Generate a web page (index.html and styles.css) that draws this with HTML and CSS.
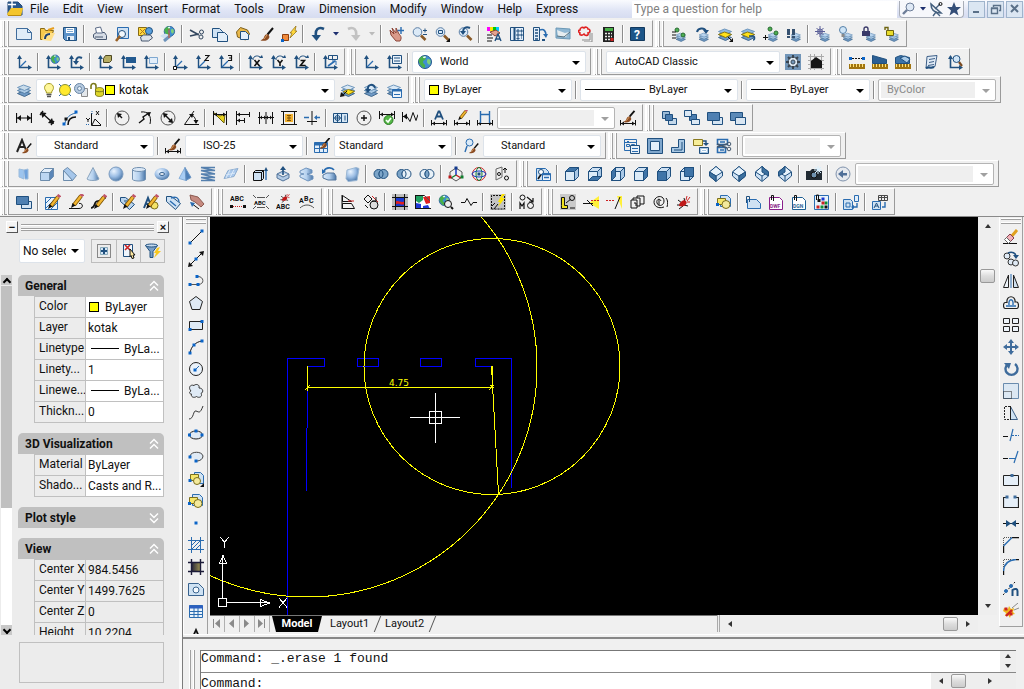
FILE: index.html
```
<!DOCTYPE html>
<html lang="en">

<head>
    <meta charset="UTF-8">
    <meta name="viewport" content="width=device-width, initial-scale=1.0">
    <title>AutoCAD Classic</title>
    <link rel="stylesheet" href="styles.css">
</head>

<body>
    <header class="menubar">
        <span class="logo" data-icon="logo"></span>
        <nav class="menu">
            <button>File</button>
            <button>Edit</button>
            <button>View</button>
            <button>Insert</button>
            <button>Format</button>
            <button>Tools</button>
            <button>Draw</button>
            <button>Dimension</button>
            <button>Modify</button>
            <button>Window</button>
            <button>Help</button>
            <button>Express</button>
        </nav>
        <input class="ask" type="text" aria-label="Help search" placeholder="Type a question for help">
        <div class="info" data-tools="search more comm star"></div>
        <div class="win" data-tools="win-min win-restore win-close"></div>
    </header>

    <!-- docked toolbars -->
    <div class="dock">
        <div class="row">
            <div class="bar" data-tools="new open save | print preview publish web | cut copy paste match blockedit | undo more redo more-off | pan zoom-rt zoom-win zoom-prev | props dcenter palettes sheetset markup calc | help"></div>
            <div class="bar" data-tools="lay-match lay-prev lay-iso lay-uniso lay-copy lay-walk | lay-freeze lay-off lay-lock lay-unlock"></div>
        </div>

        <div class="row">
            <div class="bar" data-tools="ucs | ucs-world ucs-prev | ucs-face ucs-object ucs-view | ucs-origin ucs-z ucs-3 | ucs-rx ucs-ry ucs-rz | ucs-apply"></div>
            <div class="bar">
                <span class="tools" data-tools="ucs ucs-named |"></span>
                <div class="combo combo-mid">
                    <span class="pic" data-icon="globe"></span>
                    <select aria-label="UCS"><option>World</option></select>
                </div>
            </div>
            <div class="bar">
                <div class="combo combo-mid">
                    <select class="pad-s" aria-label="Workspace"><option>AutoCAD Classic</option></select>
                </div>
                <span class="tools" data-tools="gear my-workspace"></span>
            </div>
            <div class="bar" data-tools="inq-dist inq-area inq-mass | inq-list inq-id"></div>
        </div>

        <div class="row">
            <div class="bar">
                <span class="tools" data-tools="layers"></span>
                <div class="combo combo-layer">
                    <span class="pic" data-icon="bulb"></span>
                    <span class="pic" data-icon="sun"></span>
                    <span class="pic" data-icon="vp-freeze"></span>
                    <span class="pic" data-icon="unlock"></span>
                    <i class="swatch"></i>
                    <select aria-label="Layer"><option>kotak</option></select>
                </div>
                <span class="tools" data-tools="lay-current lay-back lay-states"></span>
            </div>
            <div class="bar">
                <div class="combo combo-color">
                    <i class="swatch"></i>
                    <select aria-label="Color"><option>ByLayer</option></select>
                </div>
                <span class="sep"></span>
                <div class="combo combo-ltype">
                    <i class="dash dash-long"></i>
                    <select aria-label="Linetype"><option>ByLayer</option></select>
                </div>
                <span class="sep"></span>
                <div class="combo combo-lweight">
                    <i class="dash"></i>
                    <select aria-label="Lineweight"><option>ByLayer</option></select>
                </div>
                <span class="sep"></span>
                <div class="combo combo-style off">
                    <select class="pad-s" aria-label="Plot style" disabled><option>ByColor</option></select>
                </div>
            </div>
        </div>

        <div class="row">
            <div class="bar">
                <span class="tools" data-tools="dim-lin dim-align dim-arc dim-ord | dim-rad dim-jog dim-dia dim-ang | dim-quick dim-base dim-cont dim-space dim-break | dim-tol dim-center dim-inspect dim-jogline | dim-edit dim-tedit dim-update"></span>
                <div class="combo combo-style off">
                    <select aria-label="Dimension style" disabled><option></option></select>
                </div>
                <span class="tools" data-tools="dim-style"></span>
            </div>
            <div class="bar" data-tools="ord-front ord-back ord-above ord-under"></div>
        </div>

        <div class="row">
            <div class="bar">
                <span class="tools" data-tools="text-style"></span>
                <div class="combo combo-style">
                    <select class="pad-l" aria-label="Text style"><option>Standard</option></select>
                </div>
                <span class="tools" data-tools="| dim-style"></span>
                <div class="combo combo-style">
                    <select class="pad-l" aria-label="Dim style"><option>ISO-25</option></select>
                </div>
                <span class="tools" data-tools="| table-style"></span>
                <div class="combo combo-style">
                    <select class="pad-0" aria-label="Table style"><option>Standard</option></select>
                </div>
                <span class="tools" data-tools="| ml-style"></span>
                <div class="combo combo-style">
                    <select class="pad-l" aria-label="Multileader style"><option>Standard</option></select>
                </div>
            </div>
            <div class="bar">
                <span class="tools" data-tools="vp-dialog vp-single vp-poly vp-object vp-clip |"></span>
                <div class="combo combo-scale off">
                    <select aria-label="Viewport scale" disabled><option></option></select>
                </div>
            </div>
        </div>

        <div class="row">
            <div class="bar" data-tools="polysolid box wedge cone sphere cylinder torus pyramid helix planar | extrude presspull sweep revolve loft | union subtract intersect | move3d rotate3d align3d"></div>
            <div class="bar">
                <span class="tools" data-tools="view-named | view-top view-bottom view-left view-right view-front view-back | iso-sw iso-se iso-ne iso-nw | camera | view-prev"></span>
                <div class="combo combo-views off">
                    <select aria-label="Views" disabled><option></option></select>
                </div>
            </div>
        </div>

        <div class="row">
            <div class="bar" data-tools="ord-above | edit-hatch edit-pline edit-spline | edit-attr edit-block sync-attr extract-attr"></div>
            <div class="bar" data-tools="txt-fit txt-mask txt-explode txt-arc"></div>
            <div class="bar" data-tools="blk-list blk-trim | xclip img-clip wipe-globe breakline | super-hatch | mocoro"></div>
            <div class="bar" data-tools="ex-move ex-beam ex-trim ex-extrude ex-spiral ex-bug"></div>
            <div class="bar" data-tools="insert-block | xref ref-dwf ref-dgn ref-img | frame-a | frame-b"></div>
        </div>
    </div>

    <main class="work">
        <aside class="palette">
            <div class="palette-title">
                <button class="mini" aria-label="Collapse">&minus;</button>
                <span class="lines"></span>
                <button class="mini" aria-label="Close">&times;</button>
            </div>
            <div class="palette-pick">
                <div class="combo combo-pick">
                    <select aria-label="Selection"><option>No selection</option></select>
                </div>
                <div class="pick-tools" data-tools="pick-add pick-object pick-quick"></div>
            </div>
            <div class="palette-body">
                <div class="pscroll">
                    <button class="mini-up" aria-label="Scroll up"></button>
                    <i class="pthumb"></i>
                    <button class="mini-down" aria-label="Scroll down"></button>
                </div>
                <div class="groups">
                    <section>
                        <h2>General <span data-icon="chev-up"></span></h2>
                        <table>
                            <tr><th>Color</th><td><i class="swatch"></i>ByLayer</td></tr>
                            <tr><th>Layer</th><td>kotak</td></tr>
                            <tr><th>Linetype</th><td><i class="dash"></i>ByLa...</td></tr>
                            <tr><th>Linety...</th><td>1</td></tr>
                            <tr><th>Linewe...</th><td><i class="dash"></i>ByLa...</td></tr>
                            <tr><th>Thickn...</th><td>0</td></tr>
                        </table>
                    </section>
                    <section>
                        <h2>3D Visualization <span data-icon="chev-up"></span></h2>
                        <table>
                            <tr><th>Material</th><td>ByLayer</td></tr>
                            <tr><th>Shado...</th><td>Casts and R...</td></tr>
                        </table>
                    </section>
                    <section>
                        <h2>Plot style <span data-icon="chev-down"></span></h2>
                    </section>
                    <section>
                        <h2>View <span data-icon="chev-up"></span></h2>
                        <table class="readonly">
                            <tr><th>Center X</th><td>984.5456</td></tr>
                            <tr><th>Center Y</th><td>1499.7625</td></tr>
                            <tr><th>Center Z</th><td>0</td></tr>
                            <tr><th>Height</th><td>10.2204</td></tr>
                        </table>
                    </section>
                </div>
            </div>
            <div class="palette-hint"></div>
        </aside>

        <div class="side">
            <div class="editor">
                <div class="vbar" data-tools="line xline pline polygon rect arc circle revcloud spline ellipse ellarc insert-more insert-block point hatch gradient region table mtext"></div>

                <div class="view">
                    <div class="view-main">
                        <svg class="drawing" aria-label="Model space">
                            <g transform="translate(-210 -217)" shape-rendering="crispEdges">
                                <g class="blue">
                                    <path d="M287.5 615V358.5H324.5V366.5H307.5V428M306.5 428V491" />
                                    <path d="M357.5 358.5h21v8h-21zM420.5 358.5h21v8h-21z" />
                                    <path d="M491 366.5H475.5V358.5H511.5V488" />
                                </g>
                                <g class="yellow">
                                    <circle cx="492" cy="366.5" r="128" />
                                    <circle cx="307" cy="367" r="230" />
                                    <path d="M307.5 366v25M307 387.5h185M491.5 366l7 128M492.5 366v22" />
                                    <path d="M305 390l5-5M306 389l3-3M489 390l5-5M490 385l4 3M492 389v3" />
                                    <text x="389" y="386">4.75</text>
                                </g>
                                <g class="white">
                                    <path d="M410 417.5h50M435.5 393v50M429.5 411.5h12v12h-12z" />
                                    <path d="M218.5 598.5h8v8h-8zM222.5 598V564M227 602.5h33" />
                                    <path d="M219.500 563.5h7l-3.500-8zM222.500 555v9M260.500 599.500v7l9-3.500zM260 602.500h10" />
                                    <path d="M220 537l4.500 5v5.500M229 537l-4.500 5M279 598l8 9.500M287 598l-8 9.500" />
                                </g>
                            </g>
                        </svg>
                        <div class="scroll scroll-v">
                            <button class="up" aria-label="Scroll up"></button>
                            <i class="thumb"></i>
                            <button class="down" aria-label="Scroll down"></button>
                        </div>
                    </div>
                    <div class="view-foot">
                        <div class="tabs">
                            <div class="tab-nav" data-tools="nav-first nav-prev nav-next nav-last"></div>
                            <button class="tab active">Model</button>
                            <button class="tab">Layout1</button>
                            <button class="tab">Layout2</button>
                        </div>
                        <div class="scroll scroll-h">
                            <button class="left" aria-label="Scroll left"></button>
                            <i class="thumb"></i>
                            <button class="right" aria-label="Scroll right"></button>
                        </div>
                    </div>
                </div>

                <div class="vbar vbar-right" data-tools="erase copy-obj mirror offset array move rotate scale stretch trim extend break-pt break join chamfer fillet dots-n explode"></div>
            </div>

            <div class="command">
                <div class="command-box">
                    <div class="history">
                        <output>Command: _.erase 1 found</output>
                        <div class="scroll scroll-log">
                            <button class="up" aria-label="Scroll up"></button>
                            <button class="down" aria-label="Scroll down"></button>
                        </div>
                    </div>
                    <div class="prompt">
                        <input type="text" aria-label="Command line" value="Command:">
                        <div class="scroll scroll-cmd">
                            <button class="left" aria-label="Scroll left"></button>
                            <i class="thumb"></i>
                            <button class="right" aria-label="Scroll right"></button>
                        </div>
                    </div>
                </div>
            </div>
        </div>
    </main>

    <script src="app.js"></script>
</body>

</html>
```
FILE: styles.css
```
* {
    margin: 0;
    padding: 0;
    box-sizing: border-box;
}

body {
    display: flex;
    flex-direction: column;
    height: 100vh;
    overflow: hidden;
    background: #f0f0f0;
    color: #111;
    font: 12px Roboto, "Liberation Sans", sans-serif;
}

button,
select,
input {
    font: inherit;
    color: inherit;
    background: none;
    border: none;
    outline: none;
}

svg {
    display: block;
    flex: none;
}

/* menu */
.menubar {
    display: flex;
    align-items: center;
    height: 18px;
    flex: none;
    background: linear-gradient(#fafbfe, #dfe4f5 60%, #d6dcf0);
}

.logo {
    width: 23px;
    padding-left: 7px;
}

.menu {
    display: flex;
    width: 609px;
}

.menu button {
    padding: 0 7px;
    line-height: 18px;
}

.ask {
    flex: 1;
    min-width: 0;
    height: 17px;
    padding: 0 2px;
    background: #fff;
}

.ask::placeholder {
    color: #808080;
    opacity: 1;
}

.info {
    display: flex;
    height: 17px;
    margin: 0 4px 0 2px;
    background: #f6f7fb;
    border: 1px solid #a9aeb8;
    border-top: none;
    border-radius: 0 0 4px 4px;
    overflow: hidden;
}

.info .tool {
    width: 18px;
    height: 16px;
}

.info .t-more {
    width: 9px;
}

.win {
    display: flex;
    gap: 2px;
    margin-right: 1px;
}

.win .tool {
    width: 17px;
    height: 17px;
    border: 1px solid #9fb4cc;
    background: #dbe6f2;
}

/* toolbars */
.dock {
    flex: none;
    padding: 1px 0;
    border-bottom: 1px solid #8a8a8a;
}

.row {
    display: flex;
    height: 28px;
    padding-top: 1px;
    gap: 2px;
}

.bar {
    display: flex;
    align-items: center;
    flex: none;
    padding-right: 3px;
    border-top: 1px solid #fff;
    border-right: 1px solid #9a9a9a;
    border-bottom: 1px solid #9a9a9a;
}

.bar::before {
    content: "";
    width: 12px;
    height: 26px;
    background: linear-gradient(90deg, #fff 0 2px, transparent 2px 3px, #fff 3px 4px, #a0a0a0 4px 5px, transparent 5px 7px, #fff 7px 8px, #a0a0a0 8px 9px, transparent 9px);
}

.tools {
    display: contents;
}

.tool {
    display: flex;
    align-items: center;
    justify-content: center;
    width: 23px;
    height: 22px;
    flex: none;
}

.tool:hover {
    background: #dfe9f5;
}

.bar .t-more,
.bar .t-more-off {
    width: 13px;
}

.sep {
    width: 6px;
    height: 18px;
    flex: none;
    background: linear-gradient(90deg, transparent 2px, #8c8c8c 2px 3px, #fff 3px 4px, transparent 4px);
}

/* drop-downs */
.combo {
    position: relative;
    display: flex;
    align-items: center;
    height: 22px;
    margin: 0 1px;
    padding: 0 4px;
    background: #fff;
    border: 1px solid #dde3ea;
    border-radius: 2px;
    font-size: 11px;
}

.combo select {
    flex: 1;
    min-width: 0;
    height: 18px;
    padding: 0 16px 0 4px;
    appearance: none;
}

.combo::after {
    content: "";
    position: absolute;
    right: 5px;
    top: 9px;
    border: 4px solid transparent;
    border-top-color: #000;
    border-bottom: none;
    pointer-events: none;
}

.combo select.pad-0 {
    padding-left: 0;
}

.combo select.pad-l {
    padding-left: 13px;
}

.combo-mid {
    width: 174px;
}

.combo-layer {
    width: 299px;
}

.combo-layer select {
    font-size: 12px;
}

.combo-color {
    width: 148px;
}

.combo-ltype {
    width: 158px;
}

.combo-lweight {
    width: 124px;
}

.combo-style {
    width: 118px;
}

.combo-scale {
    width: 99px;
}

.combo-views {
    width: 139px;
}

.off {
    background: linear-gradient(#efefef, #efefef) 2px 2px / calc(100% - 22px) 16px no-repeat #fff;
    border-color: #b4b4b4;
}

.off select {
    opacity: 1;
    color: #8a8a8a;
}

.off::after {
    border-top-color: #a0a0a0;
}

.pic {
    width: 16px;
}

.combo-mid .pic {
    width: 19px;
}

.swatch {
    width: 10px;
    height: 10px;
    flex: none;
    background: #ff0;
    border: 1px solid #000;
}

.dash {
    width: 35px;
    height: 1px;
    flex: none;
    background: #000;
}

.dash-long {
    width: 60px;
}

/* properties palette */
.work {
    display: flex;
    flex: 1;
    min-height: 0;
}

.palette {
    display: flex;
    flex-direction: column;
    width: 183px;
    flex: none;
    padding-right: 6px;
    background: #ececec;
    border-right: 1px solid #7c7c7c;
    box-shadow: inset -3px 0 #fafafa;
}

.palette-title {
    display: flex;
    align-items: center;
    gap: 3px;
    padding: 4px 7px 6px 6px;
}

.mini {
    width: 12px;
    height: 12px;
    font: bold 11px/9px "Liberation Sans", sans-serif;
    background: #f4f4f4;
    border: 1px solid;
    border-color: #fff #555 #555 #fff;
}

.lines {
    flex: 1;
    height: 7px;
    border: solid #a0a0a0;
    border-width: 1px 0;
    background: linear-gradient(#fff 1px, transparent 1px 3px, #a0a0a0 3px 4px, #fff 4px);
}

.palette-pick {
    display: flex;
    gap: 6px;
    padding: 0 11px 0 19px;
}

.combo-pick {
    width: 66px;
    height: 24px;
    margin: 0;
    padding: 0 0 0 3px;
    font-size: 12px;
}

.combo.combo-pick select {
    padding: 0;
    margin-right: 18px;
}

.pick-tools {
    display: flex;
    border: 1px solid #bdbdbd;
}

.pick-tools .tool {
    width: 24px;
}

.pick-tools .tool + .tool {
    border-left: 1px solid #bdbdbd;
}

.palette-body {
    display: flex;
    flex: 1;
    min-height: 0;
    gap: 6px;
    margin: 12px 12px 7px 0;
    overflow: hidden;
}

.pscroll {
    display: flex;
    flex-direction: column;
    justify-content: space-between;
    width: 12px;
    flex: none;
    border-left: 1px solid #ececec;
    background: #fff;
}

.pscroll button {
    height: 10px;
    background: #c8c8c8;
}

.pthumb {
    height: 223px;
    margin-bottom: auto;
    background: #c0c0c0;
    border-top: 1px solid #ececec;
}

.mini-up::before,
.mini-down::before {
    content: "";
    display: block;
    width: 4px;
    height: 4px;
    margin: 4px auto 0;
    border: solid #000;
    border-width: 2px 0 0 2px;
    transform: rotate(45deg);
}

.mini-down::before {
    margin-top: 0;
    transform: rotate(225deg);
}

.groups {
    flex: 1;
    min-width: 0;
}

.groups section {
    margin-bottom: 10px;
}

.groups h2 {
    display: flex;
    align-items: center;
    justify-content: space-between;
    height: 21px;
    padding: 0 2px 0 7px;
    background: #c0c0c0;
    border-radius: 5px 5px 0 0;
    font-size: 12px;
}

.groups table {
    width: 130px;
    margin-left: auto;
    table-layout: fixed;
    border-collapse: collapse;
}

.groups th,
.groups td {
    height: 21px;
    border: 1px solid #c0c0c0;
    font-weight: normal;
    text-align: left;
    white-space: nowrap;
    overflow: hidden;
}

.groups th {
    width: 51px;
    padding: 0 0 2px 4px;
}

.groups td {
    padding-left: 2px;
    background: #fff;
}

.groups .readonly td {
    background: none;
}

.groups td .swatch,
.groups td .dash {
    display: inline-block;
    vertical-align: -1px;
    margin: 0 6px 0 1px;
}

.groups td .dash {
    width: 28px;
    margin: 0 5px 0 3px;
    vertical-align: 4px;
}

.palette-hint {
    height: 41px;
    margin: 0 12px 6px 19px;
    border: 1px solid #c0c0c0;
}

/* drawing area */
.side {
    display: flex;
    flex-direction: column;
    flex: 1;
    min-width: 0;
}

.editor {
    display: flex;
    flex: 1;
    min-height: 0;
    border-bottom: 1px solid #fff;
}

.vbar {
    display: flex;
    flex-direction: column;
    align-items: center;
    width: 25px;
    flex: none;
    overflow: hidden;
    border-left: 1px solid #fff;
    border-right: 1px solid #a0a0a0;
}

.vbar::before {
    content: "";
    width: 20px;
    height: 9px;
    flex: none;
    background: linear-gradient(transparent 1px, #fff 1px 2px, #a0a0a0 2px 3px, transparent 3px 5px, #fff 5px 6px, #a0a0a0 6px 7px, transparent 7px);
}

.vbar-right {
    align-self: flex-start;
    width: 24px;
    margin-left: 2px;
    margin-right: 1px;
    padding-bottom: 4px;
    border-bottom: 1px solid #a0a0a0;
}

.view {
    display: flex;
    flex-direction: column;
    flex: 1;
    min-width: 0;
    padding: 0 0 2px 2px;
}

.view-main {
    display: flex;
    flex: 1;
    min-height: 0;
}

.drawing {
    flex: 1;
    width: 0;
    height: 100%;
    background: #000;
}

.drawing path,
.drawing circle {
    fill: none;
}

.blue {
    stroke: #00f;
}

.yellow {
    stroke: #ff0;
}

.white {
    stroke: #fff;
}

.drawing text {
    font: 9px "DejaVu Sans", sans-serif;
    fill: #ff0;
    stroke: none;
}

.view-foot {
    display: flex;
    height: 17px;
    flex: none;
    margin-right: 19px;
}

.tabs {
    display: flex;
    flex: 1;
    border-top: 1px solid #777;
}

.tab-nav {
    display: flex;
    margin-right: 6px;
}

.tab-nav .tool {
    width: 15px;
    height: 16px;
    border-right: 1px solid #b0b0b0;
}

.tab {
    position: relative;
    padding: 0 8px;
    font-size: 11px;
    line-height: 16px;
}

.tab::after {
    content: "";
    position: absolute;
    right: -1px;
    top: 0;
    width: 1px;
    height: 16px;
    background: #555;
    transform: skewX(-22deg);
}

.tab.active {
    z-index: 1;
    width: 50px;
    margin-left: -4px;
    padding: 0 4px;
    color: #fff;
    font-weight: bold;
    background: #000;
    clip-path: polygon(0 0, 100% 0, 92% 100%, 8% 100%);
}

/* scroll bars */
.scroll {
    display: flex;
    align-items: center;
    background: #eee;
}

.scroll button {
    display: flex;
    align-items: center;
    justify-content: center;
    width: 20px;
    height: 18px;
    flex: none;
}

.scroll button::before {
    content: "";
    border: 3px solid transparent;
}

.scroll .up::before {
    border-bottom: 4px solid #333;
    border-top: none;
}

.scroll .down::before {
    border-top: 4px solid #333;
    border-bottom: none;
}

.scroll .left::before {
    border-right: 4px solid #333;
    border-left: none;
}

.scroll .right::before {
    border-left: 4px solid #333;
    border-right: none;
}

.thumb {
    width: 15px;
    height: 14px;
    background: linear-gradient(#fafafa, #ddd 50%, #ccc);
    border: 1px solid #999;
    border-radius: 2px;
}

.scroll-v {
    flex-direction: column;
    width: 19px;
}

.scroll-v .thumb {
    margin: 34px 0 auto;
}

.scroll-h {
    width: 261px;
    border-left: 3px double #aaa;
}

.scroll-h .thumb {
    margin-left: auto;
}

/* command line */
.command {
    display: flex;
    flex: none;
    height: 52px;
    margin-top: 2px;
    padding: 11px 8px 0 0;
    border-top: 2px solid #888;
}

.command::before {
    content: "";
    width: 17px;
    background: linear-gradient(90deg, transparent 6px, #fff 6px 7px, #a0a0a0 7px 8px, transparent 8px 10px, #fff 10px 11px, #a0a0a0 11px 12px, transparent 12px);
}

.command-box {
    flex: 1;
    border: solid #777;
    border-width: 1px 0 0 1px;
    background: #fff;
    font: 13px "Liberation Mono", "Courier New", monospace;
}

.history {
    display: flex;
    justify-content: space-between;
    height: 22px;
    line-height: 15px;
    border-bottom: 1px solid #888;
}

.scroll-log {
    flex-direction: column;
    width: 16px;
}

.scroll-log button {
    height: 10px;
    width: 16px;
}

.prompt {
    display: flex;
}

.prompt input {
    flex: 1;
    height: 20px;
}

.scroll-cmd {
    width: 85px;
    height: 16px;
    padding-right: 16px;
}

.scroll-cmd .thumb {
    margin-right: auto;
}
```
FILE: app.js
```
const K = '#111', N = '#20507f', B = '#2a6cb0', L = '#cfe2f3', M = '#7fa8d0', Y = '#ffd83d', R = '#cc2222', G = '#8a8a8a', W = '#fff';

// path helpers: f = fill, s = stroke, b = both
const f = (d, c) => `<path d="${d}" fill="${c}"/>`;
const s = (d, c = K, w = 1) => `<path d="${d}" fill="none" stroke="${c}" stroke-width="${w}"/>`;
const dash = (d, c = K, gaps = '1 1') => `<path d="${d}" fill="none" stroke="${c}" stroke-dasharray="${gaps}"/>`;
const b = (d, c = L, k = N) => `<path d="${d}" fill="${c}" stroke="${k}"/>`;
const o = (x, y, r, c = 'none', k = K) => `<circle cx="${x}" cy="${y}" r="${r}" fill="${c}" stroke="${k}"/>`;
const t = (x, y, str, size = 7, c = K) => `<text x="${x}" y="${y}" font-size="${size}" font-weight="bold" fill="${c}">${str}</text>`;
const dot = (x, y, c = '#0a64c8') => f(`M${x - 1.5} ${y - 1.5}h3v3h-3z`, c);
const g = (move, body) => `<g transform="${move}">${body}</g>`;

// shared pieces
const pencil = s('M13 3L6 12', '#7a5200', 4) + s('M13 3L6 12', '#f2b632', 2.4) + s('M14.600 1L13 3', '#c0566a', 3.6) + f('M4.500 10l-1.500 5 4.500-2.500z', K);
const brush = s('M15 2L9.500 8.500', K, 2) + f('M10.500 8.500c-3-1-4 1-5 4l-3 2c4 1 8 0 9-3.500z', '#8a4b22') + s('M9 9l-3 4', '#e0a060');
const axes = s('M3.500 2.500v11H14', N, 1.4) + s('M4 13l6-6', B, 1.2) + f('M1 5l2.500-4L6 5z', N) + f('M12 11l4 2.500-4 2.500z', N);
const smallAxes = s('M3.500 2.500v11H14', N, 1.6) + f('M1 5l2.500-4L6 5z', N) + f('M12 11l4 2.500-4 2.500z', N);
const globe = o(8, 8, 6.5, '#3f8fd0', '#24578f') + f('M4 3c3-2 5-1 5 1S6 6 6 8s3 2 2 5-5-2-6-5 1-4 2-5z', '#49b04a') + f('M11 5c3 0 3 3 2 5s-3-1-3-2 0-3 1-3z', '#7fd07a') + f('M6 3c1-1 3-1 3 0s-3 2-3 0z', '#e8f6ff');
const stack = (top = '#d8e8f6') => b('M1.500 11.500l6-2.500 7 2.500-6 3z', '#6d98c4', '#41698f') + b('M1.500 8.500l6-2.500 7 2.500-6 3z', '#a9c8e4', '#5580a8') + b('M1.500 5.500l6-2.500 7 2.500-6 3z', top, '#6f97bd');
const lowStack = g('translate(4 5) scale(.72)', stack('#b8d4ee'));
const lens = o(6.500, 6, 4.3, '#dceaf7', '#5c7fa6') + s('M10 9.500l4.500 4.500', '#8a5a28', 2.6);
const dimArr = s('M.5 3v10M15.500 3v10M1 8h14', K, 1.2) + f('M1 8l4-3v6zM15 8l-4-3v6z', K);
const lowDim = s('M.5 10v5.500M15.500 10v5.500M1 13.500h14') + f('M1 13.500l3-2v4zM15 13.500l-3-2v4z', K);
const ruler = f('M0 10h16v5H0z', '#a07410') + s('M1.500 10v3M4.500 10v3M7.500 10v3M10.500 10v3M13.500 10v3', '#ffe27a');
const cubes = (face) => b('M1.500 5.500h9v9h-9z', face === 'front' ? '#3f74a8' : '#dcebf8')
    + b('M1.500 5.500l4-4h9l-4 4z', face === 'top' ? '#3f74a8' : '#cde0f2')
    + b('M10.500 5.500l4-4v9l-4 4z', face === 'right' ? '#3f74a8' : '#a9c8e6')
    + (face === 'left' ? b('M1.500 5.500l4-4v9l-4 4z', '#3f74a8') : '')
    + (face === 'bottom' ? b('M1.500 14.500l4-4h9l-4 4z', '#3f74a8') : '')
    + (face === 'back' ? b('M5.500 1.500h9v9h-9z', '#3f74a8') : '');
const iso = (dark) => b('M8 .5l6.500 5.500v4L8 15.500 1.500 10V6z', '#cfe2f4') + b('M8 .5L14.500 6 8 10 1.500 6z', '#e8f3fc') + s('M8 10v5', N) + b(dark, '#3c709f');
const pair = (mid, left, right) => o(5.500, 8, 4.5, left, N) + o(10.500, 8, 4.5, right, N) + b('M8 4.200a4.500 4.500 0 010 7.600 4.500 4.500 0 010-7.600z', mid);
const bug = s('M3 6l4 3M2 11h4M4 15l4-3M9 4l1 4M13 12l-4-1', K) + f('M4 12c0-4 5-7 7-5s-1 7-7 5z', '#c01818') + s('M11 6l1-4M12 7l3-4M12 8h3', R);
const refSheet = (label, c) => b('M1.500 3.500h10l3 3v9h-13z', W, c) + s('M3.500 6V1.500h2V7', K) + t(2, 14, label, 5, c);

const icons = {
    logo: b('M1 1h10l4 4v9H1z', '#29588e', '#244a78') + f('M0 13l4-6h12l-2 8H1z', '#f4c52c') + s('M5 0v7M1 3.500h8', W, 1.4) + s('M1 14.500h13', '#b88a10'),
    search: o(9, 6, 4, '#dfe9f6', '#6d7d98') + s('M6 9l-4 4', '#6d7d98', 2.4),
    more: f('M2 6h6L5 9.500z', '#1d2f6f'),
    'more-off': f('M2 6h6L5 9.500z', '#bbb'),
    comm: s('M3 3c0 6 4 9 10 9z', '#45607f', 1.6) + s('M7 8l5-5M5 15l3-4 4 4', '#45607f', 1.4) + o(12.500, 3, 1.5),
    star: f('M8 1l2 5h5l-4 3.500 1.500 5L8 11.500l-4.500 3 1.500-5L1 6h5z', '#344e78'),
    'win-min': s('M4 11h6', '#5a7088', 2),
    'win-restore': s('M5.500 6V4.500h7v5H11M3.500 7.500h6v5h-6zM3 7h7', '#5a7088', 1.4),
    'win-close': s('M4 4l7 7M11 4l-7 7', '#5a7088', 2),

    new: b('M.5 2.500h11l4 4v7H.5z', '#dfecf8', '#3f6c9c') + s('M11.500 2.500v4h4', '#3f6c9c'),
    open: b('M1.500 2.500h4l1 2h8l-3 9h-10z', '#f6c84c', '#8a6a14') + f('M3 14L6 7h10l-4 8z', '#ffe08a') + s('M6 13c0-4 2-5 5-5', '#1c3f6e', 2) + s('M9 4l6-2', '#e79f1e', 2),
    save: b('M1.500 1.500h13v13h-11l-2-2z', '#5d93c9') + f('M4 2h8v5H4z', W) + s('M5 3.500h6M5 5.500h6', M) + f('M5 10h7v4H5z', '#e6eef6') + f('M6 11h2v3H6z', N),
    print: b('M2.500 8.500l3-2h8l2 3v4h-10l-3-2z', '#d7dde6', '#46566e') + b('M5.500 7l-1-5 5-1 2 6z', W, '#5a6a86') + s('M4 11h8', '#46566e'),
    preview: b('M3.500 1.500h11v11h-11z', '#cfe1f3', B) + o(8, 8, 3.5, '#f2f8fd', N) + s('M6 10l-4 5', '#9a6226', 2.6),
    publish: b('M1.500 1.500h8v8h-8z', Y, '#876a12') + s('M3 3l5 5M8 3L3 8', '#b07818') + o(12, 5, 3.5, '#5aa0dc', N) + b('M3.500 11l3-2h7l2 3-4 3h-7z', '#dde3ea', '#46566e'),
    web: g('translate(3 -1) scale(.8)', globe) + f('M0 10c4-3 7-3 10 0l-5 3z', '#cfe0f0') + s('M4 15l6-5', '#6d93bb', 3) + s('M9 3v9', '#d24b2a'),
    cut: s('M1 4l9 5M1 10l9-2', '#33475f', 1.6) + o(12.500, 6, 2, 'none', '#33475f') + o(12, 11, 2, 'none', '#33475f'),
    copy: b('M.5 2.500h7l3 3v6H.5z', '#cfe2f4') + b('M5.500 6.500h7l3 3v6h-10z', '#e2eef9'),
    paste: b('M1.500 6l4-4.500 7 2.500 2 4-4 6-8-3z', '#e9b84a', '#7d5e1a') + b('M5.500 5.500h5l3 3v5h-8z', '#e4effa'),
    match: brush,
    blockedit: b('M1.500 8.500h6v6h-6z', '#f08a3c', '#8c3f0f') + f('M9 7l6-7-1 5h2l-7 7 2-5z', Y) + s('M9 7l6-7-1 5h2l-7 7 2-5z', '#8c6a10', .7) + dot(1.5, 14.5),
    undo: s('M14 3C8 0 5 4 6 10', N, 2.6) + f('M1.500 9h9.500l-4.500 6z', N),
    redo: s('M2 3c6-3 9 1 8 7', '#c2c2c2', 2.6) + f('M5 9h9.500L10 15z', '#c2c2c2'),
    pan: b('M2 4l4 4-2-6 4 5V2l3 6c2 2 3 4 1 7H8L3 9z', '#d99a8a', '#8c4538') + s('M13 1v7M9.500 4.500H16', B, 1.4),
    'zoom-rt': lens + s('M12 4.500h4M14 2.500v4M12 8.500h4', N),
    'zoom-win': lens + s('M4.500 4.500h4v3h-4z', N) + f('M16 12v4h-4z', K),
    'zoom-prev': lens + s('M13 2c-4-2-7 0-7 4', N, 2) + f('M3 5h6l-3 4z', N),
    props: f('M1 1h3v4H1z', '#f0f') + f('M4 1h3v4H4z', '#ffe600') + f('M7 1h3v4H7z', '#0c0') + f('M10 1h3v4h-3z', '#00c8ff') + b('M4 6l6-2 4 3-5 3z', '#e5a28d', '#8c4538') + s('M1 9h5M1 12h6M1 15h5') + s('M9 15l3-7 3 7M10 13h4', N, 1.4),
    dcenter: b('M1.500 1.500h13v13h-13z', '#e2eefa') + s('M5.500 2v12', N, 2) + s('M8 4h2v2H8zM12 4h1v2h-1zM8 8h2v2H8zM12 8h1v2h-1zM8 12h2v1H8zM12 12h1', N),
    palettes: b('M1.500 1.500h6v13h-6z', '#e2eefa') + s('M3 4h3M3 7h3M3 10h3M3 13h3', N, 1.6) + s('M8 4c4-2 6 2 6 5', B, 1.6) + f('M11 8h5l-2 4z', B) + s('M10 14h3', N, 2),
    sheetset: b('M1 2l14 1v10l-14-1z', '#90b8d4', '#6b98b6') + f('M2 4l8 3 4-1-3 5-8-1z', '#e6edf0') + s('M2 10l7 1 6-5', '#58717f'),
    markup: s('M12 5v9H4M14 7v9H6', G) + s('M2 4c0-3 3-3 4-2 2-2 4 0 4 1 3 0 2 4 0 4 1 3-3 3-4 1-2 2-5 1-4-1-2-1-2-3 0-3z', '#e02020', 1.6),
    calc: f('M2 1h11v15H2z', '#222') + f('M4 2h8v3H4z', '#48b048') + s('M4 7.500h7M4 10.500h7M4 13.500h7', '#e8e8e8', 1.6) + s('M6.500 6v9M9.500 6v9', '#222') + dot(11, 13.5, R),
    help: b('M.5 1.500h14v13H.5z', '#1c5588', '#12395e') + t(4, 13, '?', 12, W),

    'lay-match': lowStack + o(6, 4, 2, '#4caf50', '#2a6b34') + o(12, 9, 2, '#4caf50', '#2a6b34') + s('M1 6h4M1 9h4M1 12h4'),
    'lay-prev': lowStack + s('M3 6c1-4 7-5 9-1', N, 2) + f('M9 4h6l-3 4z', N),
    'lay-iso': stack('#8fb8df') + b('M1.500 8.500l6-2.500 7 2.500-6 3z', '#ffe21a', '#8a7710') + f('M16 12v4h-4z', K) + s('M11 11l4 4'),
    'lay-uniso': stack('#8fb8df') + b('M1.500 8.500l6-2.500 7 2.500-6 3z', '#ffe21a', '#8a7710') + s('M9 10h4c2 0 2 4 0 4', N, 1.6),
    'lay-copy': lowStack + o(7, 3, 2, '#4caf50', '#2a6b34') + o(13, 7, 2, '#4caf50', '#2a6b34') + s('M0 11.500h5M2.500 9v5'),
    'lay-walk': lowStack + f('M1 3h3v6H1zM6 3h3v6H6z', '#35506f') + f('M1 10h3v2H1zM6 10h3v2H6z', '#35506f'),
    'lay-freeze': lowStack + s('M5 0v11M0 5.500h10M1.500 2l7 7M8.500 2l-7 7', '#5a5f98') + o(5, 5.500, 2.5, 'none', '#5a5f98'),
    'lay-off': lowStack + o(5, 4, 3.5, '#cfe5f7', '#5580a8') + f('M3.500 8h3v3h-3z', G),
    'lay-lock': lowStack + s('M3 5V3a2 2 0 014 0v2', '#3a3a6a', 1.4) + f('M1 5h8v5H1z', '#3a3a6a'),
    'lay-unlock': lowStack + s('M1 4V1.500h3V5', '#6d6410', 1.4) + b('M2.500 4.500h7v5h-7z', '#e8dc2c', '#6d6410'),
    'lay-current': stack() + b('M3.500 9.500l5-2 6 2-6 3z', '#ffe21a', '#8a7710') + f('M0 15l1-5 4 4z', K) + s('M2 14l5-5', K),
    'lay-back': stack() + s('M5 8C4 2 11 1 12 6', N, 2) + f('M2 7h6l-3 4z', N),
    'lay-states': stack() + b('M6.500 7.500h9v8h-9z', '#eef5fc', B) + s('M6 8.500h10', B, 2) + s('M8 12.500h6', B),
    layers: stack('#c9dcea'),
    bulb: b('M5 9C2 6 4 1.500 8 1.500S14 6 11 9l-.5 2h-5z', '#fff79a', '#a59a20') + s('M5.500 12.500h5M6 14.500h4', '#555', 1.6),
    sun: o(8, 8, 5.5, '#ffe92e', '#8c9030') + s('M2 2l2 2M14 2l-2 2M2 14l2-2M14 14l-2-2', B),
    'vp-freeze': b('M8.500 6.500h6v8h-6z', '#e4e8ec', G) + o(6.500, 6.500, 5, '#b7cbe0', '#6885a5') + o(6.500, 6.500, 2, '#e3eef8', '#6885a5'),
    unlock: s('M2 7V4a2.500 2.500 0 015 0v4', '#7c7a1c', 1.6) + b('M6.500 7c2-2 6-2 8 0v6c-2 2-6 2-8 0z', '#ded62a', '#7c7a1c') + s('M6.500 9c2 1 6 1 8 0', '#7c7a1c'),
    globe: globe,

    ucs: axes,
    'ucs-world': smallAxes + g('translate(5 0) scale(.65)', globe),
    'ucs-prev': smallAxes + s('M14 4c-4-2-6 0-6 4', N, 2) + f('M5 7h6l-3 4z', N),
    'ucs-face': smallAxes + b('M6.500 4.500l2-3h6v5l-2 2h-6z', '#b5ac62', '#4d4822'),
    'ucs-object': smallAxes + f('M6 3h10v6H6z', '#225a90'),
    'ucs-view': smallAxes + b('M6.500 3.500h8v6h-8z', '#e2eefa', M),
    'ucs-origin': axes + b('M1.500 12.500h3v3h-3z', W, K),
    'ucs-z': axes + s('M10 1.500h4l-4 5h4', K, 1.2),
    'ucs-3': axes + s('M10 1.500h3.500v5H10M11 4h2', K, 1.2),
    'ucs-rx': smallAxes + s('M6 6c0-5 6-5 8-2', N) + f('M12 4h4l-1-3z', N) + s('M7.500 6l5 6M12.500 6l-5 6', K, 1.6),
    'ucs-ry': smallAxes + s('M6 6c0-5 6-5 8-2', N) + f('M12 4h4l-1-3z', N) + s('M7.500 6l2.500 3v3M12.500 6L10 9', K, 1.6),
    'ucs-rz': smallAxes + s('M6 6c0-5 6-5 8-2', N) + f('M12 4h4l-1-3z', N) + s('M7.500 6.500h4l-4 5h5', K, 1.6),
    'ucs-apply': smallAxes + s('M6.500 1.500h9v4h-9zM10.500 1.500v4', N) + s('M6 12l7-5', B, 1.6) + s('M10 7h4v4', B),
    'ucs-named': smallAxes + b('M6.500 1.500h9v8h-9z', '#e9f2fb', N) + s('M8 4h6M8 7h6', N),
    gear: f('M0 0h16v16H0z', '#7195b8') + o(8, 8, 5, '#dce6ee', '#3d4c5a') + s('M8 1v3M8 12v3M1 8h3M12 8h3M3 3l2 2M11 11l2 2M13 3l-2 2M3 13l2-2', '#39444f', 2) + o(8, 8, 2, '#7195b8', '#3d4c5a'),
    'my-workspace': s('M0 2.500h16M0 6.500h16M0 10.500h16M0 14.500h16M2.500 0v16M6.500 0v16M13.500 0v16', '#aaa') + f('M3 14V7l5-4 6 4v7z', '#151515'),
    'inq-dist': dot(1.5, 4.5) + dot(14.500, 4.500) + dash('M3 4.500h10', K, '2 1') + ruler,
    'inq-area': b('M.5 1.500l14 4v4H.5z', '#2b5e93') + ruler,
    'inq-mass': b('M.5 3.500l5-2 9 2v6H.5z', '#3c73a8') + b('M5 4l5-2 5 3-3 4z', '#a9cbe8') + ruler,
    'inq-list': b('M3 2.500l10-1-2 11-9 2z', '#dfeaf5', '#3d5f88') + s('M5 5.500l6-1M5 8.500l5-1M4 11.500l6-1', '#3d5f88') + s('M2 14c3-2 4 1 8-1', N, 2),
    'inq-id': smallAxes + o(9.500, 5, 3.5, '#cfe5f8', N) + s('M12 8l3 4', '#7a4a20', 2.2),

    'dim-lin': dimArr,
    'dim-align': s('M4 1L1 5M15 11l-3 4M3.500 3.500l10 9', K, 1.3) + f('M1.500 2l6 1-4 5zM15 14l-6-1 4-5z', K),
    'dim-arc': s('M3 13C4 8 8 4 14 3', B) + s('M6 15c0-5 3-8 8-8', K, 1.6) + dot(2, 14) + dot(14, 2) + dot(4, 9, K),
    'dim-ord': s('M6.500 3v12.500H16M7 15l3-6 6 6M1 8l2 2 2-2M3 10v2M11 1l3 4M14 1l-3 4') + dash('M1 14.500h4M7 1v3', B),
    'dim-rad': o(8, 8, 7, 'none', '#555') + s('M8 8L4 4', K, 1.4) + f('M3 3l5 1-4 4z', K),
    'dim-jog': s('M4 2c7-1 11 4 9 12') + s('M2 13l5-4-1-2 6-4', K, 1.4) + f('M14 2l-5 .5 3 4z', K),
    'dim-dia': o(8, 8, 7, 'none', '#555') + s('M4 4l8 8', K, 1.4) + f('M3 3l5 1-4 4zM13 13l-5-1 4-4z', K),
    'dim-ang': s('M11 1L1.500 14.500H16M8 5c4 1 5 5 5 8') + f('M6 4h5l-2 4zM10.500 10h5L13 14z', K),
    'dim-quick': s('M1.500 1v14M14.500 1v14') + b('M2 3l10 10 1-9-5 2z', '#e9d420', '#6d620c') + s('M2 4.500h12') + f('M2 4.500l3-2v4zM14 4.500l-3-2v4z', K),
    'dim-base': s('M1.500 1v14M2 4.500h12.500M2 10.500h7.500M14.500 2v5M9.500 8v5') + f('M2 4.500l3-2v4zM2 10.500l3-2v4z', K),
    'dim-cont': s('M1.500 2v12M8 2v12M14.500 2v12M0 7.500h16') + f('M2 7.500l2-2v4zM14 7.500l-2-2v4zM8 7.500l-2-2v4zM8 7.500l2-2v4z', K),
    'dim-space': s('M0 1.500h16M0 14.500h16M2.500 2v12M13.500 2v12') + f('M4 4h8v8H4z', '#f0b030') + s('M6 5.500h4M6 8h4M6 10.500h4M8 5v6', '#7c5208'),
    'dim-break': s('M0 7.500h5M11 7.500h5', B, 1.6) + s('M8 1v14M3 11.500h10') + f('M13 5v5l-3-2.500z', B),
    'dim-tol': b('M.5 3.500h14v9H.5z', '#d6e7f6') + o(4.500, 8, 2.5, 'none', N) + s('M4.500 4v8M1 8h7M8.500 4v8M12 5.500v5', N),
    'dim-center': o(8, 8, 7, 'none', '#555') + s('M5 8h6M8 5v6', K, 1.4),
    'dim-inspect': s('M.5 1v8M15.500 1v8M1 4.500h14') + f('M1 4.500l3-2v4zM15 4.500l-3-2v4z', K) + o(9.500, 10, 4.5, '#56b848', '#2c7a24') + s('M7 10l2 2 3-4', W, 1.6),
    'dim-jogline': s('M.5 2v10M1 6.500h4l3 5 3-9 3 8 2-6') + f('M1 6.500l4-3v6z', K),
    'dim-edit': lowDim + s('M4 9.500l3.500-8h1l3.500 8M5.500 6.500h5', N, 1.8),
    'dim-tedit': lowDim + g('translate(2 -1) scale(.75)', pencil),
    'dim-update': lowDim + s('M3.500 1v12M12.500 1v12M4 4.500h8', B, 1.4),
    'dim-style': lowDim + g('translate(1 -1) scale(.9)', brush),
    'ord-front': b('M1.500 1.500h7v7h-7z', '#9dbcd8') + b('M7.500 8.500h8v6h-8z', '#c4d8ea') + b('M4.500 4.500h7v6h-7z', '#4a7db0'),
    'ord-back': b('M5.500 4.500h7v6h-7z', '#4a7db0') + b('M.5 .5h7v6h-7z', '#dbe8f4') + b('M7.500 9.500h8v5h-8z', '#dbe8f4'),
    'ord-above': b('M5.500 7.500h10v7h-10z', '#d4e4f3') + b('M.5 2.500h12v8H.5z', '#4f80b2'),
    'ord-under': b('M.5 2.500h12v8H.5z', '#5c8ab8') + b('M5.500 7.500h10v7h-10z', '#d9e6f2'),

    'text-style': s('M1 14L6 2l4 10M3 9h6', '#222', 2) + g('translate(4 4) scale(.75)', brush),
    'table-style': b('M.5 4.500h13v10H.5z', '#e2eefa', B) + s('M.5 6h13', B, 3) + s('M1 10.500h12M5.500 7v7M9.500 7v7', B) + g('translate(3 -2) scale(.85)', brush),
    'ml-style': o(6.500, 4.500, 3.5, '#dcebf8', B) + s('M4 8l-2 6', B, 1.4) + g('translate(4 4) scale(.75)', brush),
    'vp-dialog': s('M.5 1.500h12v11H.5zM1 4.500h11M3 3.500h2M2.500 6.500h3v2h-3zM7.500 6.500h3v2h-3z', B) + b('M6.500 7.500h9v8h-9z', '#e8f1fa') + s('M8 10.500h6M8 13.500h6', B),
    'vp-single': b('M.5 .5h15v15H.5z', '#7fa6cc') + b('M3.500 3.500h9v9h-9z', '#e2eefa'),
    'vp-poly': b('M1.500 9.500h7v-8h6v13h-13z', '#a9c8e4') + s('M4 12h8V4', N),
    'vp-object': b('M.5 1.500h9v6H.5z', '#f7ee9a', '#8a7a20') + s('M10 3h3v3', N, 1.4) + f('M10 5h6l-3 3z', N) + b('M6.500 9.500h9v6h-9z', '#a9c8e4') + s('M8.500 11.500h5v2h-5z', W),
    'vp-clip': s('M1.500 1.500h10v5h-10zM1.500 9.500h8v5h-8zM4 4h5M4 12h4', B, 1.6) + s('M1 6l10 4M1 9l10-3', '#43586f', 1.4) + o(13, 6, 1.8, 'none', '#43586f') + o(13, 11, 1.8, 'none', '#43586f'),

    polysolid: b('M3 3l5 1v9l-5-2z', '#9cc4ee', '#9cbcdc') + b('M8 4l4-1v10h-3', '#6fa2dc', '#9cbcdc'),
    box: b('M1.500 6.500h9v8h-9z', '#bcd6f2', '#6d8cac') + b('M1.500 6.500l4-4h9l-4 4z', '#e2eefb', '#6d8cac') + b('M10.500 6.500l4-4v8l-4 4z', '#5a86b8', '#6d8cac'),
    wedge: b('M1.500 4.500l4-3 9 8-4 5z', '#a5c6ea', '#6d8cac') + b('M1.500 4.500v10h9z', '#d9e8f8', '#6d8cac'),
    cone: b('M8 1.500L14 13c-2 2-10 2-12 0z', 'url(#blue)', '#8aa4be'),
    sphere: o(8, 8, 7, 'url(#ball)', '#7c9cc0'),
    cylinder: b('M1.500 3.500v10c2 2 11 2 13 0v-10z', 'url(#blue)', '#7190b0') + `<ellipse cx="8" cy="3.500" rx="6.500" ry="2" fill="#dbe8f6" stroke="#7190b0"/>`,
    torus: `<ellipse cx="8" cy="8" rx="7.500" ry="6" fill="url(#ball)"/><ellipse cx="8" cy="8" rx="2.500" ry="1.500" fill="#e9eef4" stroke="#34608f"/>`,
    pyramid: b('M8 1.500l-6 11 7 2z', '#a8cdf4', '#8ab0da') + b('M8 1.500l1 13 5-3z', '#4d7fb8', '#6c96c4'),
    helix: s('M15 1.500H1l14 3H1l14 3.500H1l14 3.500H1l14 3H1', '#5580ae', 1.3),
    planar: b('M5 4.500l10-2-4 8-10 2z', '#a9c8ec', '#8faed0') + s('M7 4l-4 8M11 3.500l-4 8M3 9l9-2', '#dbe9f8'),
    extrude: b('M1.500 6.500h8v8h-8zM1.500 6.500l2-2h8l-2 2zM9.500 6.500l2-2v8l-2 2', '#cfe2f4', K) + s('M14 14V3', B, 1.4) + f('M12 5l2-4 2 4z', N),
    presspull: b('M2 8l6-3 6 3-6 3zM2 8v4l6 3 6-3V8', '#b3cbe5', '#52749b') + s('M8 9V3', N, 1.6) + f('M5 4l3-4 3 4z', N),
    sweep: b('M2 5l6-3 6 2v3l-5 1 6 2v3l-5 2-8-4V9l4-1-4-1z', 'url(#blue)', '#6e94bf'),
    revolve: b('M2 9l4-2h7l2 3v4H7l-5-2z', 'url(#blue)', '#52749b') + s('M3 5c2-4 8-4 10-1', B, 1.6) + f('M1 3v5l4-2z', B),
    loft: b('M3 4l9-2.500 3 1-2 12-9 1-2-3z', 'url(#ball)', '#9cb8d4'),
    union: pair('#7ba4c8', '#7ba4c8', '#7ba4c8'),
    subtract: pair('#e8f1f8', '#7ba4c8', '#e8f1f8'),
    intersect: pair('#7ba4c8', '#e8f1f8', '#e8f1f8'),
    move3d: s('M8 2L2 6v5l6 4 6-4V6z', '#555') + s('M8 9V2', '#0a2cc0', 1.4) + s('M8 9l-5 3', '#108030', 1.4) + s('M8 9l5 3', '#c01818', 1.4) + dot(8, 2, '#123a8c') + dot(2, 11, '#c01818') + dot(14, 11, '#108030'),
    rotate3d: o(8, 8, 6.5, 'none', '#d02020') + `<ellipse cx="8" cy="8" rx="3" ry="6.500" fill="none" stroke="#108030"/><ellipse cx="8" cy="8" rx="7" ry="3" fill="none" stroke="#1040c0"/>` + dot(8, 8, N),
    align3d: b('M2 3l6-2v10l-6 3z', '#eee', '#666') + o(5, 8, 1.5) + s('M11 7V3M9 4l2-2 2 2') + o(12.500, 12, 2),
    'view-named': b('M1.500 2.500h9l3 3v9h-12z', L, B) + s('M3 13l4-6', K, 1.6) + o(6, 6, 2.5, W, N) + b('M7.500 7.500h8v7h-8z', '#eef5fc', B) + s('M7.500 8.500h8M9 11.500h5', B, 1.4),
    'view-top': cubes('top'),
    'view-bottom': cubes('bottom'),
    'view-left': cubes('left'),
    'view-right': cubes('right'),
    'view-front': cubes('front'),
    'view-back': cubes('back'),
    'iso-sw': iso('M1.500 6L8 10v5.500L1.500 10z'),
    'iso-se': iso('M14.500 6L8 10v5.500l6.500-5.500z'),
    'iso-ne': iso('M8 .5L14.500 6v4L8 6z'),
    'iso-nw': iso('M8 .5L1.500 6v4L8 6z'),
    camera: f('M0 5h4l2-2h5l1 2h4v9H0z', '#222b33') + o(8, 9, 3, '#7093b0', '#111') + s('M12 0v8M8 4h8M9 1l6 6M15 1L9 7', '#d8f0ff'),
    'view-prev': o(8, 8, 7, '#e6e9ee', '#7f92ac') + f('M3 8l5-4v3h4v2.500H8V12z', '#4f6f98'),

    'edit-hatch': b('M.5 3.500h12v12H.5z', '#eaf3fb', B) + s('M1 9l5-5M1 14l10-10M6 15l6-6', B) + pencil,
    'edit-pline': s('M1 14.500h10c5 0 4-6 0-5', K) + g('translate(0 -1)', pencil),
    'edit-spline': s('M0 14c5 0 2-7 7-7s3-5 8-3', K, 1.6) + pencil,
    'edit-attr': b('M.5 3.500h5l9 7-5 5-9-8z', '#b9d4ee') + s('M4 7h5M5 9h5', N) + pencil,
    'edit-block': s('M1 14L5 4l4 10M3 10h5', N, 2) + o(11.500, 11.500, 3.5, '#f4e36a', '#7c6f1c') + pencil,
    'sync-attr': b('M.5 2.500h5l9 7-5 6-9-8z', '#cfe2f4') + s('M5 4c5-2 8 0 8 4M4 7l6 5', B, 1.4),
    'extract-attr': b('M1 1l8 2 6 7-3 3-6-5-4-2z', '#c58a80', '#8c5a50') + s('M2 9l8 6', K) + f('M1 8l5 1-3 4z', B),
    'txt-fit': t(0, 7, 'ABC', 7) + dash('M3 12.500h10', R, '1 1') + dot(1.5, 12.500, K) + dot(14.500, 12.500, K),
    'txt-mask': s('M0 1l3 3M16 1l-3 3M0 15l3-3M16 15l-3-3M4 3.500h8M4 13.500h8', '#555') + t(1, 11, 'ABC', 6),
    'txt-explode': g('translate(3 -2) scale(.7)', bug) + t(0, 15, 'ABC', 7),
    'txt-arc': t(0, 9, 'A', 7) + t(5, 7, 'B', 7) + t(10, 9, 'C', 7) + s('M1 14c4-4 10-4 14 0', '#555'),
    'blk-list': s('M2.500 1.500l9 6h-9zM2.500 9.500h9l3 5h-12zM2 1v14') + s('M8 7l6 0', R),
    'blk-trim': s('M1 5l4-4 4 4-4 4zM2 11l3 3') + o(11, 11, 4, '#ddd') + s('M9 2l6 6', R) + s('M13 3v4h-4'),
    xclip: f('M0 0h16v16H0z', '#bdbdbd') + f('M3 4h10v9H3z', '#1838d0') + f('M3 8c3-3 6 2 10-1v3c-4 2-6-2-10 1z', '#e02020') + s('M3.500 0v16M12.500 0v16M0 3.500h16M0 12.500h16'),
    'img-clip': f('M0 1h16v14H0z', W) + f('M1 2h7v4l-4 3-3-2z', '#1fa060') + f('M8 3l7-1v7l-4 1z', '#e02020') + f('M1 9l5 1v5H1zM8 12l5-1 2 4H8z', '#2038d8') + s('M0 1.500h9M0 14.500h16M.5 1v14') + s('M9 1l6 6', '#555'),
    'wipe-globe': g('scale(.8)', globe) + o(10, 10, 3.5, '#eee', K) + s('M13 13l2 2', K, 2),
    breakline: s('M0 8.500h4l2-4 4 7 2-3h4'),
    'super-hatch': f('M0 0h16v16H0z', '#c4c4c4') + dash('M1.500 15V1.500h13V15z', K, '2 1') + s('M2 12l3-3M4 15l4-5') + f('M8 8l4-8 3 0-3 4h3l-7 9 2-5z', '#ffe600'),
    mocoro: o(3.500, 3.500, 2.5) + o(11.500, 11.500, 3) + s('M1 15V9l2 3 2-3v6M8 3l6 5M14 4v4h-4', K, 1.2),
    'ex-move': f('M0 0h16v16H0z', '#c9c9c9') + b('M1.500 3.500h3v8h3v3h-6v-3z', '#f0e020', K) + o(12, 4, 2.5) + s('M6 9l5-4M10 14h5'),
    'ex-beam': f('M6 9L16 2v13z', '#fff03a') + s('M0 9.500h10M4 6l6 6') + dash('M8 6.500h8', R, '2 1'),
    'ex-trim': f('M11 2h5v13z', '#fff03a') + dash('M0 6.500h9', R, '2 1') + s('M14 3L9 15'),
    'ex-extrude': s('M2 6h6v8H2zM4 6V4h7v8H8M8 4V2h7v8h-4M5 9h2v3'),
    'ex-spiral': s('M12 13c-8 3-12-4-9-8s9-3 9 2-6 6-7 2 3-5 4-2M14 4c2 2 2 6 1 9') + s('M7 5v6'),
    'ex-bug': bug,
    'insert-block': b('M4.500 1.500h7l3 3v8h-10z', L, B) + b('M1.500 4.500h8v6h-8z', '#f6e76a', '#7c6f1c') + o(10, 10.500, 4, '#f4ea9c', '#7c6f1c') + dot(1.500, 10.500),
    'insert-more': b('M6.500 1.500h6l3 3v8h-9z', L, B) + b('M2.500 3.500h8v6h-8z', '#f6e76a', '#7c6f1c') + o(9, 10, 3.5, '#f4ea9c', '#7c6f1c') + dot(2, 9.500) + f('M16 12v4h-4z', K),
    'insert-draw': b('M2.500 3.500h8v6h-8z', '#f6e76a', '#7c6f1c') + o(11, 10, 3.5, '#f4ea9c', '#7c6f1c') + dot(2, 9.500),
    xref: b('M2.500 5.500h9l4 4v5h-13z', L, B) + s('M1.500 9V2.500h3V8', N),
    'ref-dwf': refSheet('DWF', '#8a1f8a'),
    'ref-dgn': refSheet('DGN', '#1d5f93'),
    'ref-img': b('M.5 1.500h14v14H.5z', '#e8f2fb', B) + dot(5, 6.500, K) + dot(9, 5, '#1838d0') + dot(12, 9, '#109030') + dot(9, 9, R) + dot(4, 13, R) + dot(8, 13, '#109030') + dot(12, 13, K) + s('M2.500 6V1h2v4', K),
    'frame-a': b('M.5 5.500h7l2 2v8h-9z', L, B) + s('M3 9h4v4H3z', B) + b('M11.500 1.500h4v6h-4z', '#e2eefa', B) + s('M14 9v4h-3', B, 1.4) + f('M8 13l3-2v4z', B),
    'frame-b': b('M.5 7.500h8v8h-8z', L, B) + s('M6.500 1.500h9v5h-9zM6 3.500h9M9.500 2v4M12.500 2v4', '#4a4a4a') + s('M13 8v5h-3', B, 1.4) + s('M2 14l2.500-5L7 14M3 12h3', N),

    'pick-add': dash('M1.500 1.500h13v13h-13z', '#222') + b('M4.500 4.500h7v7h-7z', '#d4e6f6', '#8ab') + s('M8 5v6M5 8h6', N, 2),
    'pick-object': b('M2.500 1.500h9v12h-9z', '#eef5fc', N) + s('M4 2l5 5M9 2L4 7', R, 1.6) + b('M9 6l5 6h-2l1 3-2 .5-1-3-1 1z', '#ffe9a0', K),
    'pick-quick': b('M.5 2.500h12l-4.500 6v6h-3v-6z', '#7ba0c6') + `<ellipse cx="6.500" cy="2.500" rx="6" ry="1.500" fill="#c5daee" stroke="#20507f"/>` + f('M12 5l3-1-2 4h3l-7 7 2-5H9z', '#f8c820'),
    'chev-up': s('M4 7.500l4-4 4 4M4 12.500l4-4 4 4', W, 1.4),
    'chev-down': s('M4 3.500l4 4 4-4M4 8.500l4 4 4-4', W, 1.4),

    line: s('M2 14L14 2') + dot(2, 14) + dot(14, 2),
    xline: s('M1 15L15 1') + f('M0 16l1-5 4 4zM16 0l-1 5-4-4z', K) + dot(8, 8),
    pline: s('M2 11.500h8c7 0 6-8 0-8', '#555') + dot(2, 11.500) + dot(10, 11.500) + dot(9, 3.500),
    polygon: b('M8 1.500l6.500 5-2.500 8H4l-2.500-8z', '#dfeaf5', '#222'),
    rect: b('M1.500 4.500h13v8h-13z', '#dfeaf5', '#222') + dot(2, 12.500) + dot(14, 4.500),
    arc: s('M2 14C3 8 7 3 14 2') + dot(2, 14) + dot(6, 6) + dot(14, 2),
    circle: o(8, 8, 6.5, '#eaf2fa', '#222') + s('M7 9l4-4', B) + dot(7, 9),
    revcloud: b('M3 8C0 5 2 1 6 2.500c2-2 6-1 5 2.500 4 0 5 4 2 5.500 2 3-2 5-4.500 3-3 2-6 0-5-2.500C1 11 1 9 3 8z', '#dfeaf5', '#333'),
    spline: s('M1 14c5 0 4-9 7-8s4 3 7-5', '#333'),
    ellipse: `<ellipse cx="8" cy="8" rx="6.500" ry="4" fill="#dfeaf5" stroke="#222"/>` + dot(1.500, 8) + dot(14, 8) + dot(8, 4),
    ellarc: b('M2 7c1-5 12-5 13 0 0 3-3 5-6 5', '#dfeaf5', '#444') + dot(2, 8) + dot(8, 12),
    point: dot(8, 8),
    hatch: s('M3.500 0v16M12.500 0v16M0 3.500h16M0 12.500h16', B) + s('M4 8l4-4M4 12l8-8M8 12l4-4', B),
    gradient: f('M3 3h10v10H3z', 'url(#dusk)') + s('M3.500 0v16M12.500 0v16M0 3.500h16M0 12.500h16', '#1b1b38', 1.4),
    region: b('M.5 2.500h10l5 5v7H.5z', L, '#38628e') + o(8, 9, 3, '#f4f9fd', '#38628e'),
    table: b('M1.500 2.500h13v12h-13z', '#eaf3fb', B) + s('M1 4h14', '#2d5fc0', 3) + s('M2 8.500h12M2 11.500h12M6 5v9M10 5v9', B),
    mtext: s('M3 16L8 5l5 11M5 12h6', '#111', 1.8),

    erase: s('M14 1L8 8', '#e0a020', 3) + b('M3 9l4-4 4 4-4 4z', '#f0b0b8', '#874050') + s('M0 14.500h14') + b('M1.500 10.500l2-2 4 4-2 2z', W, '#666'),
    'copy-obj': o(4, 5, 3, '#dfeaf5', '#333') + o(8, 11, 3, '#dfeaf5', '#333') + o(12.500, 12, 3, '#dfeaf5', '#333') + s('M5 2c4-2 8 0 8 4', N, 1.6) + f('M10 4h6l-3 4z', N),
    mirror: b('M5.500 2v12.500H.5z', '#eef4fa', '#222') + b('M10.500 2v12.500h5z', '#cfe0ef', '#222') + s('M8 1v14', B),
    offset: s('M4 7C3 0 13 0 12 7h2c2 1 2 6 0 6.500H2C0 13 0 8 2 7.500h2z', '#222', 1.2) + s('M3 11h10M6 10c-1-7 5-7 4 0', B, 1.4),
    array: b('M.5 1.500h6v5h-6zM9.500 1.500h6v5h-6zM.5 9.500h6v5h-6zM9.500 9.500h6v5h-6z', '#eef4fa', '#222'),
    move: s('M8 2v12M2 8h12', '#3f6c9c', 2) + f('M5 4l3-4 3 4zM5 12l3 4 3-4zM4 5L0 8l4 3zM12 5l4 3-4 3z', '#3f6c9c'),
    rotate: s('M5 3a6 6 0 107 0', '#3f6c9c', 2.4) + f('M1 2h7L6 8z', '#3f6c9c'),
    scale: b('M.5 .5h15v15H.5z', '#dce8f3', '#6a8cae') + dash('M.5 8.500h8v7h-8z', '#222'),
    stretch: b('M7.500 1.500l7 13h-7z', L, '#3c5f86') + dash('M7 1.500H1.500v13H7', '#222', '2 1') + s('M7.500 1v14', '#222'),
    trim: s('M0 9.500h5', K) + s('M7 14l3-12', B, 1.2) + dash('M9 8.500h7', B, '2 1'),
    extend: s('M0 9.500h5', K) + s('M11 14l4-12', B, 1.2) + s('M6 9.500h6', B),
    'break-pt': b('M.5 4.500h15v10H.5z', '#e6eff8', '#222') + dot(9, 4.500, '#3f6c9c'),
    break: f('M1 4h14v10H1z', '#e6eff8') + s('M4 4.500H.5v10h15v-10H12', '#222', 1.2) + dot(4, 4, '#3f6c9c') + dot(12, 4, '#3f6c9c'),
    join: s('M0 8.500h16') + f('M3 5l5 3.500L3 12zM13 5L8 8.500l5 3.500z', N),
    chamfer: s('M.5 16V9M9 .5h7', K, 1.4) + s('M.5 9L9 .5', B, 1.4) + dash('M.5 8V.5H9', '#555'),
    fillet: s('M.5 16v-4M13 .5h3', K, 1.4) + s('M.5 12C1 5 5 1 13 .5', B, 1.6) + dash('M.5 8V.5H9', '#555'),
    'dots-n': dash('M0 14L12 1', K, '2 2') + o(3, 10, 1.5, B, B) + o(8, 5, 1.5, B, B) + s('M9.500 15V9c3-2 5-1 5 1v5', N, 2),
    explode: f('M1 5l4 1 1-3 2 3 3-1-1 4 2 2-4 1-1 3-2-3-3 1 1-3-3-2z', '#f0b81c') + s('M3 13l6-6', R, 2.4) + dot(3, 6, R) + dot(8, 11, R) + s('M9 5l6-5M11 7l5-2', G),

    'nav-first': f('M11 3v9L6 7.500z', G) + s('M4.500 3v9', G),
    'nav-prev': f('M10 3v9L5 7.500z', G),
    'nav-next': f('M5 3v9l5-4.500z', G),
    'nav-last': f('M4 3v9l5-4.500z', G) + s('M10.500 3v9', G)
};

const defs = `<svg class="defs" width="0" height="0"><defs>
    <linearGradient id="blue"><stop offset="0" stop-color="#dcebfa"/><stop offset=".5" stop-color="#b4d0ee"/><stop offset="1" stop-color="#4a76a8"/></linearGradient>
    <radialGradient id="ball" cx=".35" cy=".3" r=".8"><stop offset="0" stop-color="#eaf4ff"/><stop offset=".5" stop-color="#9bbde4"/><stop offset="1" stop-color="#3d6a9c"/></radialGradient>
    <linearGradient id="dusk"><stop offset="0" stop-color="#1b1b38"/><stop offset="1" stop-color="#a59a52"/></linearGradient>
</defs></svg>`;
document.body.insertAdjacentHTML('beforeend', defs);

function draw(name) {
    const w = name.startsWith('more') ? 10 : 16;
    return `<svg width="${w}" height="16" viewBox="0 0 ${w} 16" aria-hidden="true">${icons[name]}</svg>`;
}

document.querySelectorAll('[data-icon]').forEach(el => {
    el.innerHTML = draw(el.dataset.icon);
});

document.querySelectorAll('[data-tools]').forEach(el => {
    el.innerHTML = el.dataset.tools.split(' ').map(name => name === '|'
        ? '<span class="sep"></span>'
        : `<button class="tool t-${name}" aria-label="${name}">${draw(name)}</button>`).join('');
});
```
